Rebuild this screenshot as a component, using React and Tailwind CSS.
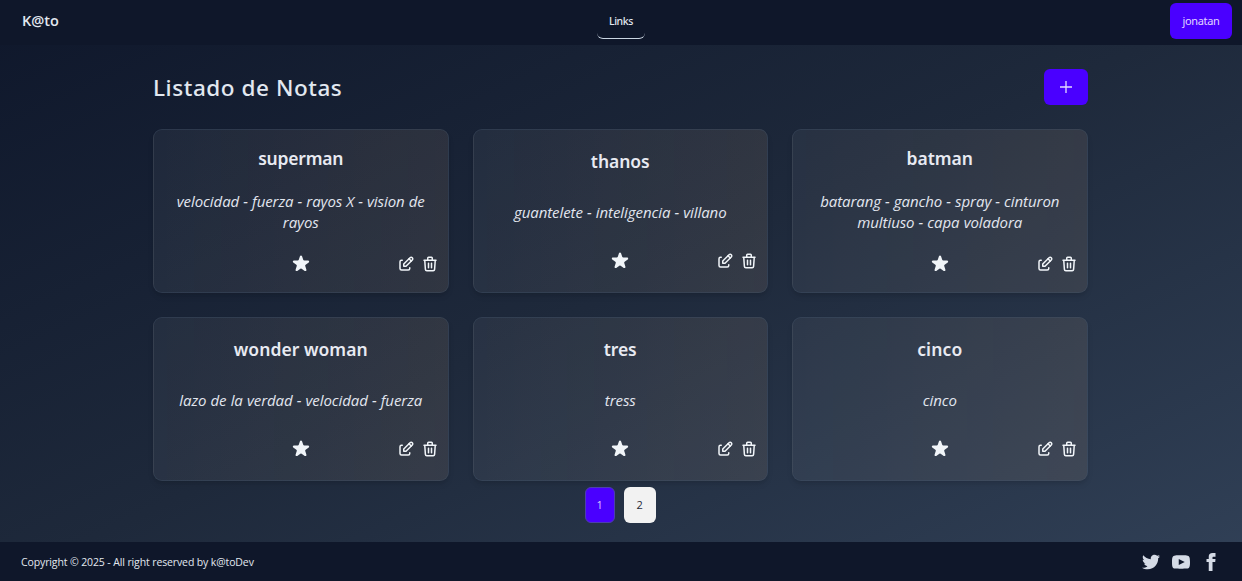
import { HiStar, HiOutlineTrash } from "react-icons/hi";
import { TbEdit } from "react-icons/tb";

const notes = [
  { title: "superman", track: "tracking-[-0.2px]", lines: ["velocidad - fuerza - rayos X - vision de", "rayos"] },
  { title: "thanos", track: "tracking-[-0.05px]", lines: ["guantelete - inteligencia - villano"] },
  { title: "batman", track: "tracking-[0px]", lines: ["batarang - gancho - spray - cinturon", "multiuso - capa voladora"] },
  { title: "wonder woman", track: "tracking-[0.05px]", lines: ["lazo de la verdad - velocidad - fuerza"] },
  { title: "tres", track: "tracking-[-0.1px]", lines: ["tress"] },
  { title: "cinco", track: "tracking-[0.15px]", lines: ["cinco"] },
];

function NoteCard({ note }) {
  const two = note.lines.length > 1;
  return (
    <article className={`flex flex-col items-center rounded-[9px] border border-slate-600/35 bg-linear-to-r from-[#ffffff0d] to-[#ffd0a018] shadow-md ${two ? "pt-[14px]" : "pt-[17px]"}`}>
      <h2 className={`font-['Noto_Sans',sans-serif] text-[17.5px] leading-7 font-semibold text-[#e8eaf2] ${note.track}`}>{note.title}</h2>
      <div className={`text-center text-[15px] leading-[21px] tracking-[-0.07px] text-[#e2e6ef] italic ${two ? "mt-[19px]" : "mt-[27px]"}`}>
        {note.lines.map((line) => (
          <p key={line} className="whitespace-nowrap [word-spacing:0.3px]">{line}</p>
        ))}
      </div>
      <div className={`grid w-full grid-cols-3 items-center px-[9px] ${two ? "mt-[21px]" : "mt-[28px]"}`}>
        <span />
        <HiStar className="-my-px size-[22px] justify-self-center text-slate-100" />
        <span className="flex items-center justify-end gap-[6px] text-slate-100">
          <TbEdit className="size-[18px]" />
          <HiOutlineTrash className="size-[18px]" />
        </span>
      </div>
    </article>
  );
}

export default function App() {
  return (
    <div className="flex h-[581px] w-[1242px] flex-col overflow-hidden bg-linear-to-br from-slate-900 via-[#1e293b] to-slate-700 font-['Open_Sans','Noto_Sans',sans-serif] text-slate-200">
      <header className="grid h-[45px] shrink-0 grid-cols-[1fr_48px_1fr] items-center bg-[#0f172a] pb-[3px]">
        <span className="pl-[22px] text-[14.5px] font-semibold">K@to</span>
        <nav className="flex justify-center">
          <a className="flex h-9 w-12 items-center justify-center rounded-md border-b border-slate-300 pt-[2px] font-['Noto_Sans',sans-serif] text-[10.5px] font-medium tracking-[-0.35px]">Links</a>
        </nav>
        <button className="mr-[10px] h-9 w-[62px] justify-self-end rounded-md bg-[#4a00ff] font-['Noto_Sans',sans-serif] text-[11px] tracking-[-0.35px] text-[#e0d6ff]">jonatan</button>
      </header>
      <main className="flex flex-1 flex-col pt-6 pr-[154.5px] pl-[153px]">
        <div className="flex items-center justify-between">
          <h1 className="pt-[2px] font-['Noto_Sans',sans-serif] text-[22.5px] leading-[34px] font-medium tracking-[0.56px]">Listado de Notas</h1>
          <button className="flex h-9 w-[43.5px] items-center justify-center rounded-md bg-[#4a00ff]">
            <svg viewBox="0 0 12 12" className="size-3 stroke-[#e4daff]"><path d="M6 0v12M0 6h12" strokeWidth="1.3" /></svg>
          </button>
        </div>
        <div className="mt-6 grid grid-cols-3 grid-rows-[164px_164px] gap-6">
          {notes.map((note) => (
            <NoteCard key={note.title} note={note} />
          ))}
        </div>
        <div className="mt-[6px] flex justify-center gap-[9px]">
          <button className="h-9 w-[30px] rounded-md border border-[#4d3fae] bg-[#4a00ff] pt-px text-[11px] text-[#d9ccff]">1</button>
          <button className="h-9 w-8 rounded-md bg-[#f2f2f2] pt-px text-[11px] font-medium text-[#1f2937]">2</button>
        </div>
      </main>
      <footer className="flex h-[39px] shrink-0 items-center justify-between bg-[#0f172a] pt-px pr-[22.5px] pl-[21px]">
        <p className="pt-px text-[10.5px] tracking-[-0.12px]">Copyright © 2025 - All right reserved by k@toDev</p>
        <div className="flex gap-3 text-[#d5dbe6]">
          <svg viewBox="0 0 24 24" className="size-[18px] fill-current"><path d="M24 4.557c-.883.392-1.832.656-2.828.775 1.017-.609 1.798-1.574 2.165-2.724-.951.564-2.005.974-3.127 1.195-.897-.957-2.178-1.555-3.594-1.555-3.179 0-5.515 2.966-4.797 6.045-4.091-.205-7.719-2.165-10.148-5.144-1.29 2.213-.669 5.108 1.523 6.574-.806-.026-1.566-.247-2.229-.616-.054 2.281 1.581 4.415 3.949 4.89-.693.188-1.452.232-2.224.084.626 1.956 2.444 3.379 4.6 3.419-2.07 1.623-4.678 2.348-7.29 2.04 2.179 1.397 4.768 2.212 7.548 2.212 9.142 0 14.307-7.721 13.995-14.646.962-.695 1.797-1.562 2.457-2.549z" /></svg>
          <svg viewBox="0 0 24 24" className="size-[18px] fill-current"><path d="M19.615 3.184c-3.604-.246-11.631-.245-15.23 0-3.897.266-4.356 2.62-4.385 8.816.029 6.185.484 8.549 4.385 8.816 3.6.245 11.626.246 15.23 0 3.897-.266 4.356-2.62 4.385-8.816-.029-6.185-.484-8.549-4.385-8.816zm-10.615 12.816v-8l8 3.993-8 4.007z" /></svg>
          <svg viewBox="0 0 24 24" className="size-[18px] fill-current"><path d="M9 8h-3v4h3v12h5v-12h3.642l.358-4h-4v-1.667c0-.955.192-1.333 1.115-1.333h2.885v-5h-3.808c-3.596 0-5.192 1.583-5.192 4.615v3.385z" /></svg>
        </div>
      </footer>
    </div>
  );
}
